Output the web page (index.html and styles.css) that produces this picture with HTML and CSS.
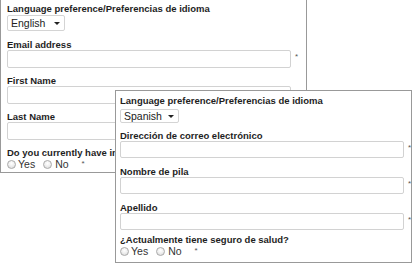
FILE: index.html
```html
<!DOCTYPE html>
<html lang="en">
<head>
    <meta charset="UTF-8">
    <meta name="viewport" content="width=device-width, initial-scale=1.0">
    <title>Language preference forms</title>
    <link rel="stylesheet" href="styles.css">
</head>
<body>
    <main class="stage">
        <form class="panel panel-en">
            <label class="field-label" for="langEn">Language preference/Preferencias de idioma</label>
            <div class="select" id="langEn">
                <span>English</span>
                <svg class="select-arrow" width="6" height="3" viewBox="0 0 6 3"><polygon points="0,0 6,0 3,3" fill="#222"/></svg>
            </div>

            <div class="field">
                <label class="field-label" for="emailEn">Email address</label>
                <div class="input-row">
                    <input type="text" id="emailEn">
                    <span class="req">*</span>
                </div>
            </div>
            <div class="field">
                <label class="field-label" for="firstEn">First Name</label>
                <div class="input-row">
                    <input type="text" id="firstEn">
                    <span class="req">*</span>
                </div>
            </div>
            <div class="field">
                <label class="field-label" for="lastEn">Last Name</label>
                <div class="input-row">
                    <input type="text" id="lastEn">
                    <span class="req">*</span>
                </div>
            </div>

            <div class="question">
                <span class="field-label">Do you currently have insurance?</span>
                <div class="radio-row">
                    <span class="radio"></span><span class="radio-text">Yes</span>
                    <span class="radio"></span><span class="radio-text">No</span>
                    <span class="req-inline">*</span>
                </div>
            </div>
        </form>

        <form class="panel panel-es">
            <label class="field-label" for="langEs">Language preference/Preferencias de idioma</label>
            <div class="select" id="langEs">
                <span>Spanish</span>
                <svg class="select-arrow" width="6" height="3" viewBox="0 0 6 3"><polygon points="0,0 6,0 3,3" fill="#222"/></svg>
            </div>

            <div class="field">
                <label class="field-label" for="emailEs">Dirección de correo electrónico</label>
                <div class="input-row">
                    <input type="text" id="emailEs">
                    <span class="req">*</span>
                </div>
            </div>
            <div class="field">
                <label class="field-label" for="firstEs">Nombre de pila</label>
                <div class="input-row">
                    <input type="text" id="firstEs">
                    <span class="req">*</span>
                </div>
            </div>
            <div class="field">
                <label class="field-label" for="lastEs">Apellido</label>
                <div class="input-row">
                    <input type="text" id="lastEs">
                    <span class="req">*</span>
                </div>
            </div>

            <div class="question">
                <span class="field-label">¿Actualmente tiene seguro de salud?</span>
                <div class="radio-row">
                    <span class="radio"></span><span class="radio-text">Yes</span>
                    <span class="radio"></span><span class="radio-text">No</span>
                    <span class="req-inline">*</span>
                </div>
            </div>
        </form>
    </main>
</body>
</html>
```

FILE: styles.css
```css
html, body {
    margin: 0;
    padding: 0;
    background-color: #fff;
}

body {
    font-family: "Liberation Sans", Arial, sans-serif;
    color: #222;
}

.stage {
    position: relative;
    width: 416px;
    height: 267px;
    overflow: hidden;
}

.panel {
    display: flex;
    flex-direction: column;
    margin: 0;
    box-sizing: border-box;
    background-color: #fff;
    border: 1px solid #999;
}

/* english form, its top edge is cut off */
.panel-en {
    width: 307px;
    border-top: 0;
    padding: 3px 8px 2px 6px;
}

/* spanish form sits over the english one */
.panel-es {
    position: absolute;
    left: 115px;
    top: 90px;
    width: 297px;
    padding: 4px 0 5px 4px;
}

.field-label {
    display: block;
    font-size: 9.5px;
    line-height: 11px;
    font-weight: bold;
    color: #1e1e1e;
    white-space: nowrap;
}

.select {
    display: flex;
    align-items: center;
    width: 58px;
    height: 16px;
    margin-top: 1px;
    padding: 0 4px 0 3px;
    box-sizing: border-box;
    border: 1px solid #d4d4d4;
    border-radius: 2px;
    font-size: 10.5px;
    color: #222;
}

.panel-es .select {
    width: 59px;
    height: 14px;
    margin-top: 3px;
}

.select-arrow {
    margin-left: auto;
}

.field {
    margin-top: 7px;
}

.panel-en .select + .field {
    margin-top: 8px;
}

.panel-es .field {
    margin-top: 8px;
}

.panel-es .select + .field {
    margin-top: 7px;
}

.input-row {
    display: flex;
    align-items: flex-start;
}

.input-row input {
    flex: 1;
    min-width: 0;
    height: 18px;
    margin: 0;
    padding: 0 3px;
    box-sizing: border-box;
    border: 1px solid #d2d2d2;
    border-radius: 2px;
    font: inherit;
    font-size: 10.5px;
    background-color: #fff;
}

.panel-es .input-row input {
    height: 17px;
}

.req {
    flex: 0 0 7px;
    padding-left: 4px;
    box-sizing: border-box;
    font-size: 8px;
    line-height: 8px;
    margin-top: 3px;
    color: #555;
}

.question {
    margin-top: 7px;
}

.panel-es .question {
    margin-top: 4px;
}

.radio-row {
    display: flex;
    align-items: center;
    height: 12px;
    font-size: 10.5px;
    color: #333;
}

.radio {
    width: 9px;
    height: 9px;
    box-sizing: border-box;
    border: 1px solid #aaa;
    border-radius: 50%;
    background: radial-gradient(circle at 50% 35%, #fff 0, #f2f2f2 40%, #d6d6d6 100%);
    margin-right: 2px;
}

.radio-text {
    margin-right: 8px;
}

.radio-text + .radio + .radio-text {
    margin-left: 1px;
    margin-right: 13px;
}

.req-inline {
    font-size: 8px;
    line-height: 8px;
    align-self: flex-start;
    margin-top: 2px;
    color: #555;
}
```
